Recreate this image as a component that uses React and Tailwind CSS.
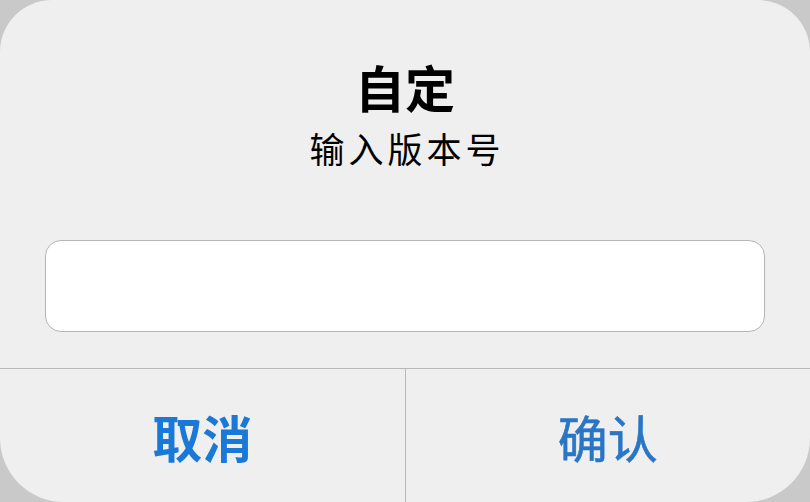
export default function App() {
  return (
    <div className="w-[810px] h-[502px] bg-[#c9c9c9] overflow-hidden" style={{ fontFamily: '"Noto Sans CJK SC", "Noto Sans", sans-serif' }}>
      <div className="h-full bg-[#efefef] rounded-t-[52px] rounded-b-[64px] flex flex-col overflow-hidden">
        <div className="pt-[61px] flex flex-col items-center">
          <div className="text-[50px] leading-[50px] font-bold text-black">自定</div>
          <div className="mt-[19px] text-[35px] leading-[35px] tracking-[4px] pl-[4px] text-black">输入版本号</div>
        </div>
        <div className="mt-[75px] mx-[45px] h-[92px] bg-white rounded-[16px] border border-[#b5b5b5]" />
        <div className="mt-[36px] flex-1 flex border-t border-[#b8b8b8]">
          <div className="flex-1 flex items-center justify-center border-r border-[#b8b8b8]">
            <span className="text-[50px] leading-none font-bold text-[#1a78d6]">取消</span>
          </div>
          <div className="flex-1 flex items-center justify-center">
            <span className="text-[50px] leading-none font-normal text-[#2a76c6]" style={{ WebkitTextStroke: '0.6px #2a76c6' }}>确认</span>
          </div>
        </div>
      </div>
    </div>
  );
}
